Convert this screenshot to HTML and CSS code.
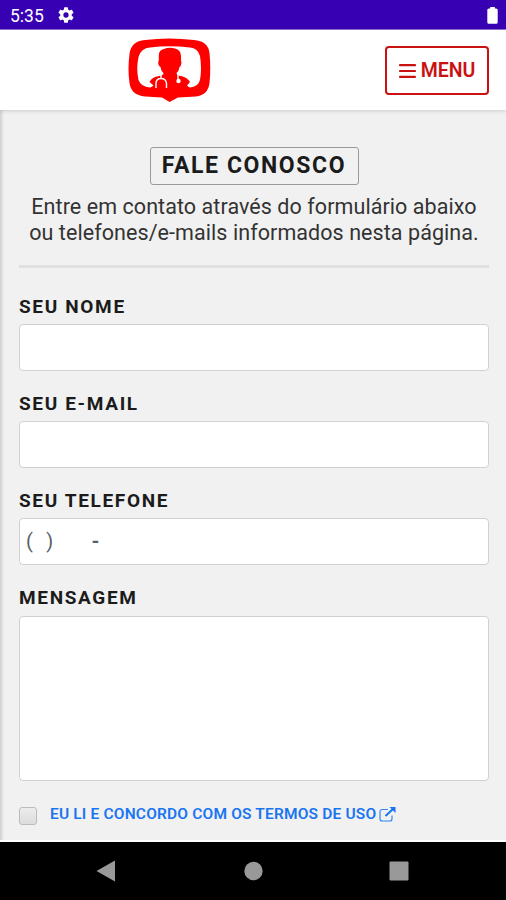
FILE: index.html
```html
<!DOCTYPE html>
<html lang="pt-BR">
<head>
<meta charset="utf-8">
<meta name="viewport" content="width=device-width, initial-scale=1">
<title>Fale Conosco</title>
<link rel="stylesheet" href="styles.css">
</head>
<body>
<div class="status">
  <span class="clock">5:35</span>
  <svg class="gear" width="16" height="16" viewBox="2 2 20 20"><path fill="#fff" d="M19.14 12.94a7 7 0 0 0 0-1.88l2.03-1.58a.5.5 0 0 0 .12-.61l-1.92-3.32a.5.5 0 0 0-.59-.22l-2.39.96a7 7 0 0 0-1.62-.94l-.36-2.54a.5.5 0 0 0-.48-.41h-3.84a.5.5 0 0 0-.47.41l-.36 2.54a7 7 0 0 0-1.62.94l-2.39-.96a.5.5 0 0 0-.59.22L2.74 8.87a.5.5 0 0 0 .12.61l2.03 1.58a7 7 0 0 0 0 1.88l-2.03 1.58a.5.5 0 0 0-.12.61l1.92 3.32c.12.22.37.29.59.22l2.39-.96c.5.38 1.03.7 1.62.94l.36 2.54c.05.24.24.41.48.41h3.84c.24 0 .44-.17.47-.41l.36-2.54a7 7 0 0 0 1.62-.94l2.39.96c.22.08.47 0 .59-.22l1.92-3.32a.5.5 0 0 0-.12-.61zM12 15.3a3.3 3.3 0 1 1 0-6.6 3.3 3.3 0 0 1 0 6.6z"/></svg>
  <svg class="battery" width="11" height="17" viewBox="0 0 11 17"><path fill="#fff" d="M3.2 0h4.6v1.500h1.400Q10.700 1.500 10.700 3v12.200q0 1.500-1.500 1.500H1.800Q.3 16.700.3 15.200V3Q.3 1.500 1.800 1.500h1.400z"/></svg>
</div>
<header class="header">
  <svg class="logo" width="84" height="66" viewBox="128 37 84 66">
    <path fill="#f00" fill-rule="evenodd" d="M145 40Q169 37 194 40Q208 41 209.500 53Q211 69 209.500 83Q208 95 196 96.500L178 97.500L169.500 102L162 97.500L145 96.500Q131 95 129.500 83Q127.500 69 129.500 54Q131 41 145 40ZM150 47.500Q169 45 190 47.500Q198 48 200 56Q202 69 200 80Q198 87 190 87.500L150 87.500Q141 87 138.500 80Q136 69 138.500 57Q141 48 150 47.500Z"/>
    <path fill="#f00" d="M158.800 55Q159 50 164 49Q169 47 175 48.500Q181 50 181 56V60.500Q182 62 181 65Q180.500 67 179.500 67Q179 71 176.500 73Q177 75.500 181 76Q187.500 77.500 190 82L187 85.500L190 88H150L153.500 85.500L149.500 82Q152 77 159 76Q163.500 75.500 163.500 73Q161 71 160.500 67Q159 66.500 158.300 64Q158 61 158.800 60.500Z"/>
    <g fill="none" stroke="#fff" stroke-width="1.400"><path d="M161 73.500v5M156 88v-4.500q0-5 5-5t5.500 5v4.500M178 74v6"/></g>
    <circle cx="178.500" cy="81" r="2.200" fill="#fff"/>
  </svg>
  <button class="menu" type="button">
    <svg width="17" height="14" viewBox="0 0 17 14"><path d="M1 1.200h15M1 7h15M1 12.800h15" stroke="#cb1212" stroke-width="2.200" stroke-linecap="round"/></svg>
    <span>MENU</span>
  </button>
</header>
<main class="page">
  <h1 class="title">FALE CONOSCO</h1>
  <p class="intro">Entre em contato através do formulário abaixo<br>ou telefones/e-mails informados nesta página.</p>
  <hr class="rule">
  <form class="form">
    <label class="label" for="nome">SEU NOME</label>
    <input class="field" id="nome" type="text">
    <label class="label" for="email">SEU E-MAIL</label>
    <input class="field" id="email" type="text">
    <label class="label" for="fone">SEU TELEFONE</label>
    <div class="field phone" id="fone"><span>(&nbsp; )</span><span class="dash">-</span></div>
    <label class="label" for="msg">MENSAGEM</label>
    <textarea class="field area" id="msg"></textarea>
    <div class="terms">
      <span class="check"></span>
      <a class="link">EU LI E CONCORDO COM OS TERMOS DE USO</a>
      <svg width="17" height="15" viewBox="0 0 17 15"><path d="M9 2.500H3.200Q1 2.500 1 4.700v7Q1 14 3.200 14h7.600Q13 14 13 11.700V8.500" fill="none" stroke="#3585f5" stroke-width="1.200"/><path d="M6.500 9L14 2" stroke="#1a75f2" stroke-width="2"/><path d="M10.500 0H16.500V6z" fill="#1a75f2"/></svg>
    </div>
  </form>
</main>
<nav class="nav">
  <svg width="506" height="58" viewBox="0 842 506 58"><path d="M96.500 871L115 860.500V881.500z" fill="#999"/><circle cx="253.500" cy="871" r="9.200" fill="#999"/><rect x="389.500" y="861.500" width="19" height="19" rx="1" fill="#999"/></svg>
</nav>
</body>
</html>
```
FILE: styles.css
```css
* { box-sizing: border-box; }
body {
  margin: 0;
  width: 506px;
  height: 900px;
  overflow: hidden;
  display: flex;
  flex-direction: column;
  font-family: Roboto, sans-serif;
  color: #1b1b1b;
  background: #f1f1f1;
}
.status {
  flex: none;
  height: 30px;
  background: #3700b3;
  display: flex;
  align-items: center;
  padding: 1px 8px 0 10px;
  border-bottom: 1px solid #8f73d3;
}
.clock { color: #fff; font-size: 17.500px; line-height: 30px; padding-top: 2px; }
.gear { margin-left: 14px; }
.battery { margin-left: auto; }
.header {
  flex: none;
  height: 80px;
  background: #fff;
  display: flex;
  align-items: flex-start;
  padding: 7px 17px 0 128px;
  box-shadow: 0 1px 4px rgba(0, 0, 0, .16);
  z-index: 1;
}
.menu {
  margin: 9px 0 0 auto;
  width: 104px;
  height: 49px;
  padding: 0;
  border: 2px solid #cb1212;
  border-radius: 4px;
  background: #fff;
  color: #cb1212;
  font: 600 19.500px/45px Roboto, sans-serif;
  display: flex;
  align-items: center;
  justify-content: center;
  gap: 5px;
}
.page {
  flex: none;
  height: 732px;
  padding: 37px 17px 0 19px;
  box-shadow: inset 4px 0 3px -2px rgba(0, 0, 0, .14);
  border-bottom: 2px solid #fff;
}
.title {
  width: 209px;
  height: 38px;
  margin: 0 auto;
  border: 1px solid #999;
  border-radius: 3px;
  font-size: 23px;
  font-weight: 700;
  line-height: 36px;
  letter-spacing: 1.600px;
  text-align: center;
  white-space: nowrap;
}
.intro {
  margin: 9px 0 0;
  font-size: 21.500px;
  line-height: 26px;
  letter-spacing: .07px;
  text-align: center;
  white-space: nowrap;
  color: #333;
}
.rule { margin: 19px 0 0; height: 3px; border: 0; background: #e0e0e0; }
.form { padding-top: 27px; }
.label {
  display: block;
  height: 23px;
  margin-bottom: 6px;
  font-size: 19px;
  font-weight: 700;
  line-height: 23px;
  letter-spacing: 1.660px;
}
.field {
  display: block;
  width: 470px;
  height: 47px;
  margin: 0 0 21px;
  border: 1px solid #ced2d6;
  border-radius: 4px;
  background: #fff;
}
.phone {
  display: flex;
  align-items: center;
  gap: 37px;
  padding: 0 6px 2px;
  color: #596168;
  font-size: 20px;
  letter-spacing: 1.200px;
}
.dash { font-weight: 700; }
.area { height: 165px; margin: 7px 0 23px; resize: none; }
.terms { display: flex; align-items: center; height: 20px; }
.check {
  width: 18px;
  height: 18px;
  margin: 3px 13px 0 0;
  border: 1px solid #bbb;
  border-radius: 3px;
  background: linear-gradient(#ececec, #dcdcdc);
}
.link { color: #1a75f2; font-size: 15.500px; font-weight: 600; white-space: nowrap; margin-right: 3px; letter-spacing: .18px; }
.nav { flex: none; height: 58px; background: #000; }
.nav svg { display: block; }
```
